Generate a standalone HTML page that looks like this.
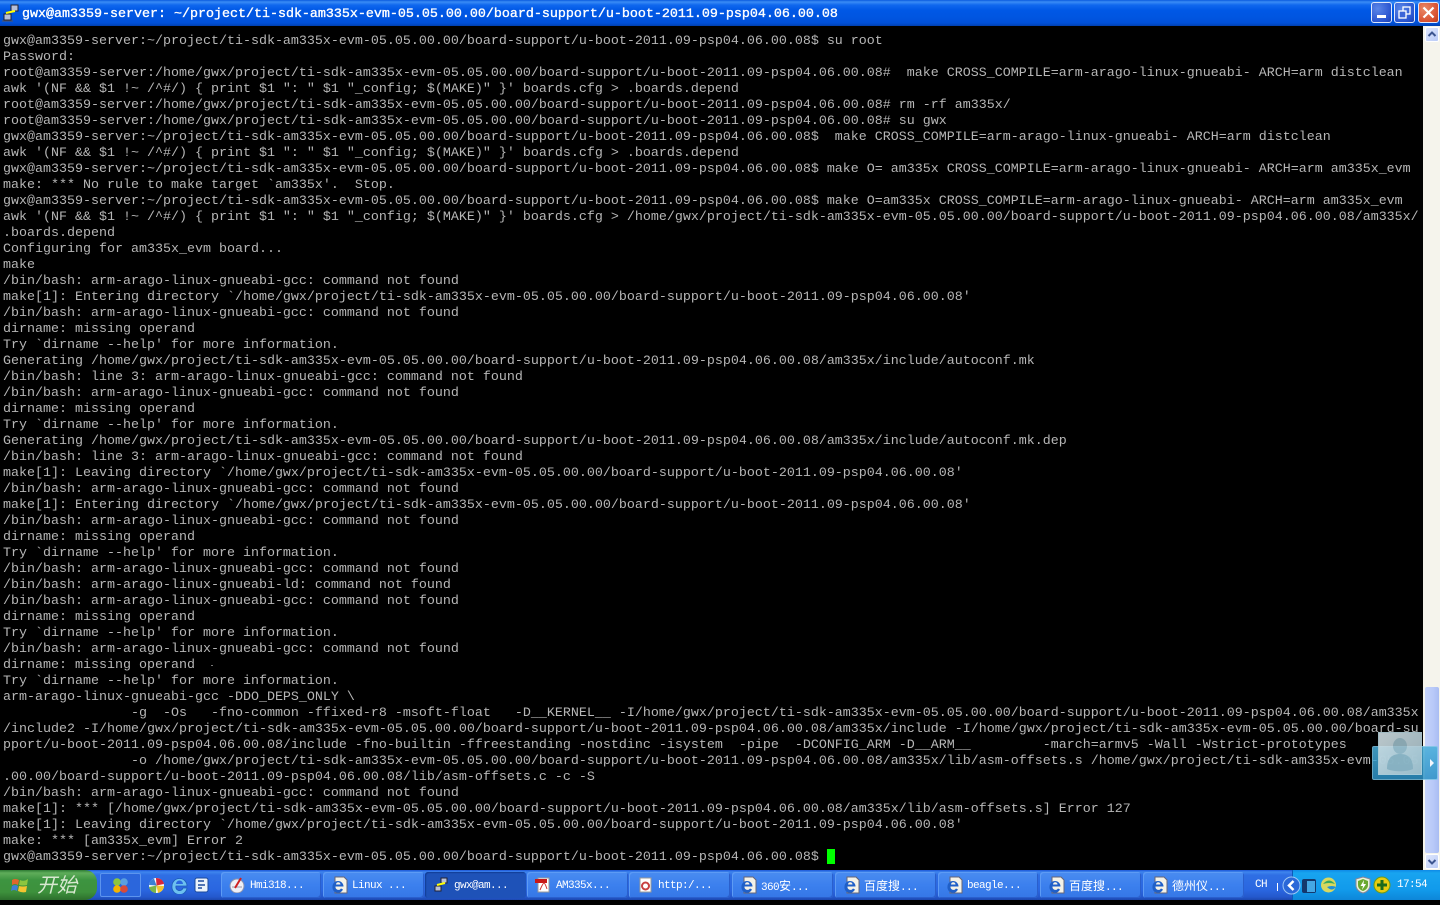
<!DOCTYPE html>
<html><head><meta charset="utf-8"><style>
html,body{margin:0;padding:0;width:1440px;height:900px;overflow:hidden;background:#000}
#title{position:absolute;left:0;top:0;width:1440px;height:26px;background:linear-gradient(180deg,#0a5adf 0,#3a8cf5 2px,#1068ee 5px,#0058e6 10px,#0055e0 18px,#0050d8 23px,#0040b0 26px)}
#ttext{position:absolute;left:22px;top:7px;font:13.333px/16px "Liberation Mono",monospace;-webkit-text-stroke:.35px #fff;color:#fff;white-space:pre}
.wb{position:absolute;top:2px;width:19px;height:19px;border:1px solid #dfe8fb;border-radius:3px;background:radial-gradient(circle at 30% 30%,#5a86e8,#2a55d0 70%,#1c3fb0)}
#term{position:absolute;left:3px;top:34px;width:1419px;height:834px;overflow:hidden;font:13.333px/16px "Liberation Mono",monospace;color:#b6b6b6;white-space:pre;margin:0;filter:blur(.3px)}
#cur{position:absolute;left:827px;top:849px;width:8px;height:15px;background:#00ff00}
#sb{position:absolute;left:1423px;top:26px;width:17px;height:844px;background:#f5f4ec}
.sbtn{position:absolute;left:2px;width:14px;height:15px;background:linear-gradient(135deg,#dfe7fd,#b9caf6);border:1px solid #fff;box-sizing:border-box;border-radius:2px}
#thumb{position:absolute;left:2px;top:661px;width:14px;height:166px;background:linear-gradient(90deg,#c4d2fa,#b8c9f8 60%,#a9bcf2);border-radius:2px}
#wbar{position:absolute;left:1372px;top:746px;width:66px;height:34px;background:linear-gradient(180deg,#49afdb,#2d92c6);border:1px solid #7cc4e4;box-sizing:border-box;border-radius:2px;opacity:.85}
#wav{position:absolute;left:1378px;top:732px;width:44px;height:43px;background:linear-gradient(135deg,#d4e2e7,#a9c5cf);border:1px solid #b8d5df;box-sizing:border-box;opacity:.88}
#task{position:absolute;left:0;top:870px;width:1440px;height:30px;background:linear-gradient(180deg,#1c55d8 0,#3f86ee 2px,#2f6fe4 5px,#2a66e0 20px,#2458cc 27px,#1c48b0 30px)}
#start{position:absolute;left:0;top:0;width:97px;height:30px;border-radius:0 12px 12px 0;background:linear-gradient(180deg,#2e7b34 0,#5fad5a 3px,#3d9440 10px,#3d913c 22px,#2c6e2c 30px)}
#start span{position:absolute;left:37px;top:2px;font:italic 20px/24px "WenQuanYi Zen Hei","Noto Sans CJK SC",sans-serif;color:#d8e8d0}
.b{position:absolute;top:2px;height:26px;border-radius:3px;background:linear-gradient(180deg,#4a8cf0,#3c80ee 50%,#3577e6);box-shadow:inset 1px 1px 0 #5d9bf4,inset -1px -1px 0 #2a5fcc;color:#fff;font:11px/26px "Liberation Mono",monospace;letter-spacing:-.6px;white-space:pre;box-sizing:border-box}
.b.on{background:#1e52b8;box-shadow:inset 1px 1px 1px #123d96}
.b i{position:absolute;top:4px;left:8px;width:17px;height:18px}
.b span{position:absolute;left:29px;top:1px}
.cjk{font:12px/26px "WenQuanYi Zen Hei","Noto Sans CJK SC",sans-serif;letter-spacing:0}
#tray{position:absolute;left:1292px;top:0;width:148px;height:30px;background:linear-gradient(180deg,#0f8ae6 0,#18a4f0 3px,#119aeb 20px,#0d86d8 30px);border-left:1px solid #0c5ab8;box-sizing:border-box}
.clock{position:absolute;left:1397px;top:0;font:11px/30px "Liberation Mono",monospace;letter-spacing:-.6px;color:#fff;white-space:pre}
</style></head><body>
<svg width="0" height="0" style="position:absolute"><symbol id="ie" viewBox="0 0 17 18"><path d="M4 1h9l3 3v13H4z" fill="#f4f2e8" stroke="#667"/><path d="M1.500 10.500a5.500 5.500 0 1 1 11 0H4.500a3 3 0 0 0 5.500 2l2 1a5.500 5.500 0 0 1-10.500-3z" fill="#1f5fc8"/><path d="M5 8.500a2.200 2.200 0 0 1 4.500 0z" fill="#f4f2e8"/></symbol></svg>
<div id="title">
<svg style="position:absolute;left:2px;top:4px" width="18" height="18" viewBox="0 0 18 18"><rect x="9" y="1" width="7" height="6" fill="#b8c0d8" stroke="#223"/><rect x="2" y="10" width="7" height="6" fill="#b8c0d8" stroke="#223"/><path d="M4 9 L13 7" stroke="#ff0" stroke-width="2"/><path d="M0 17h11" stroke="#556" stroke-width="1"/></svg>
<div id="ttext">gwx@am3359-server: ~/project/ti-sdk-am335x-evm-05.05.00.00/board-support/u-boot-2011.09-psp04.06.00.08</div>
<div class="wb" style="left:1371px"><div style="position:absolute;left:5px;top:12px;width:9px;height:3px;background:#fff"></div></div>
<div class="wb" style="left:1394px"><svg width="19" height="19" style="position:absolute;left:0;top:0"><rect x="8" y="4" width="7" height="7" fill="none" stroke="#fff" stroke-width="1.3"/><rect x="4" y="8" width="7" height="7" fill="#3c65d8" stroke="#fff" stroke-width="1.3"/></svg></div>
<div class="wb" style="left:1418px;background:radial-gradient(circle at 30% 30%,#ea8a68,#d85030 70%,#b83c18)"><svg width="19" height="19" style="position:absolute;left:0;top:0"><path d="M4.500 4.500L14.500 14.500M14.500 4.500L4.500 14.500" stroke="#fff" stroke-width="2.2"/></svg></div>
</div>
<pre id="term">gwx@am3359-server:~/project/ti-sdk-am335x-evm-05.05.00.00/board-support/u-boot-2011.09-psp04.06.00.08$ su root
Password:
root@am3359-server:/home/gwx/project/ti-sdk-am335x-evm-05.05.00.00/board-support/u-boot-2011.09-psp04.06.00.08#  make CROSS_COMPILE=arm-arago-linux-gnueabi- ARCH=arm distclean
awk '(NF &amp;&amp; $1 !~ /^#/) { print $1 ": " $1 "_config; $(MAKE)" }' boards.cfg &gt; .boards.depend
root@am3359-server:/home/gwx/project/ti-sdk-am335x-evm-05.05.00.00/board-support/u-boot-2011.09-psp04.06.00.08# rm -rf am335x/
root@am3359-server:/home/gwx/project/ti-sdk-am335x-evm-05.05.00.00/board-support/u-boot-2011.09-psp04.06.00.08# su gwx
gwx@am3359-server:~/project/ti-sdk-am335x-evm-05.05.00.00/board-support/u-boot-2011.09-psp04.06.00.08$  make CROSS_COMPILE=arm-arago-linux-gnueabi- ARCH=arm distclean
awk '(NF &amp;&amp; $1 !~ /^#/) { print $1 ": " $1 "_config; $(MAKE)" }' boards.cfg &gt; .boards.depend
gwx@am3359-server:~/project/ti-sdk-am335x-evm-05.05.00.00/board-support/u-boot-2011.09-psp04.06.00.08$ make O= am335x CROSS_COMPILE=arm-arago-linux-gnueabi- ARCH=arm am335x_evm
make: *** No rule to make target `am335x'.  Stop.
gwx@am3359-server:~/project/ti-sdk-am335x-evm-05.05.00.00/board-support/u-boot-2011.09-psp04.06.00.08$ make O=am335x CROSS_COMPILE=arm-arago-linux-gnueabi- ARCH=arm am335x_evm
awk '(NF &amp;&amp; $1 !~ /^#/) { print $1 ": " $1 "_config; $(MAKE)" }' boards.cfg &gt; /home/gwx/project/ti-sdk-am335x-evm-05.05.00.00/board-support/u-boot-2011.09-psp04.06.00.08/am335x/
.boards.depend
Configuring for am335x_evm board...
make
/bin/bash: arm-arago-linux-gnueabi-gcc: command not found
make[1]: Entering directory `/home/gwx/project/ti-sdk-am335x-evm-05.05.00.00/board-support/u-boot-2011.09-psp04.06.00.08'
/bin/bash: arm-arago-linux-gnueabi-gcc: command not found
dirname: missing operand
Try `dirname --help' for more information.
Generating /home/gwx/project/ti-sdk-am335x-evm-05.05.00.00/board-support/u-boot-2011.09-psp04.06.00.08/am335x/include/autoconf.mk
/bin/bash: line 3: arm-arago-linux-gnueabi-gcc: command not found
/bin/bash: arm-arago-linux-gnueabi-gcc: command not found
dirname: missing operand
Try `dirname --help' for more information.
Generating /home/gwx/project/ti-sdk-am335x-evm-05.05.00.00/board-support/u-boot-2011.09-psp04.06.00.08/am335x/include/autoconf.mk.dep
/bin/bash: line 3: arm-arago-linux-gnueabi-gcc: command not found
make[1]: Leaving directory `/home/gwx/project/ti-sdk-am335x-evm-05.05.00.00/board-support/u-boot-2011.09-psp04.06.00.08'
/bin/bash: arm-arago-linux-gnueabi-gcc: command not found
make[1]: Entering directory `/home/gwx/project/ti-sdk-am335x-evm-05.05.00.00/board-support/u-boot-2011.09-psp04.06.00.08'
/bin/bash: arm-arago-linux-gnueabi-gcc: command not found
dirname: missing operand
Try `dirname --help' for more information.
/bin/bash: arm-arago-linux-gnueabi-gcc: command not found
/bin/bash: arm-arago-linux-gnueabi-ld: command not found
/bin/bash: arm-arago-linux-gnueabi-gcc: command not found
dirname: missing operand
Try `dirname --help' for more information.
/bin/bash: arm-arago-linux-gnueabi-gcc: command not found
dirname: missing operand
Try `dirname --help' for more information.
arm-arago-linux-gnueabi-gcc -DDO_DEPS_ONLY \
                -g  -Os   -fno-common -ffixed-r8 -msoft-float   -D__KERNEL__ -I/home/gwx/project/ti-sdk-am335x-evm-05.05.00.00/board-support/u-boot-2011.09-psp04.06.00.08/am335x
/include2 -I/home/gwx/project/ti-sdk-am335x-evm-05.05.00.00/board-support/u-boot-2011.09-psp04.06.00.08/am335x/include -I/home/gwx/project/ti-sdk-am335x-evm-05.05.00.00/board-su
pport/u-boot-2011.09-psp04.06.00.08/include -fno-builtin -ffreestanding -nostdinc -isystem  -pipe  -DCONFIG_ARM -D__ARM__         -march=armv5 -Wall -Wstrict-prototypes
                -o /home/gwx/project/ti-sdk-am335x-evm-05.05.00.00/board-support/u-boot-2011.09-psp04.06.00.08/am335x/lib/asm-offsets.s /home/gwx/project/ti-sdk-am335x-evm-05.05
.00.00/board-support/u-boot-2011.09-psp04.06.00.08/lib/asm-offsets.c -c -S
/bin/bash: arm-arago-linux-gnueabi-gcc: command not found
make[1]: *** [/home/gwx/project/ti-sdk-am335x-evm-05.05.00.00/board-support/u-boot-2011.09-psp04.06.00.08/am335x/lib/asm-offsets.s] Error 127
make[1]: Leaving directory `/home/gwx/project/ti-sdk-am335x-evm-05.05.00.00/board-support/u-boot-2011.09-psp04.06.00.08'
make: *** [am335x_evm] Error 2
gwx@am3359-server:~/project/ti-sdk-am335x-evm-05.05.00.00/board-support/u-boot-2011.09-psp04.06.00.08$ </pre>
<div style="position:absolute;left:211px;top:665px;width:2px;height:1px;background:#777"></div>
<div id="cur"></div>
<div id="sb">
<div class="sbtn" style="top:1px"><svg width="12" height="13" style="display:block"><path d="M2.500 8L6 4.500 9.500 8" fill="none" stroke="#3c5590" stroke-width="2"/></svg></div>
<div id="thumb"></div>
<div class="sbtn" style="top:828px"><svg width="12" height="13" style="display:block"><path d="M2.500 5L6 8.500 9.500 5" fill="none" stroke="#3c5590" stroke-width="2"/></svg></div>
</div>
<div id="wbar"><svg width="8" height="10" style="position:absolute;right:1px;top:11px"><path d="M2 1L6 5 2 9z" fill="#fff"/></svg></div>
<div id="wav"><svg width="42" height="41" viewBox="0 0 42 41"><ellipse cx="21" cy="13" rx="7" ry="8" fill="#9dbdc9"/><path d="M8 36C8 24 14 21 21 21s13 3 13 15c-6 3-20 3-26 0z" fill="#94b8c5"/></svg></div>
<div id="task">
<div id="start">
<svg style="position:absolute;left:11px;top:6px" width="18" height="18" viewBox="0 0 18 18"><path d="M1 4Q4 2 8 4L7 9Q4 7 1 9z" fill="#e0662c"/><path d="M9 4Q13 6 17 3L16 9Q12 10 8 9z" fill="#8cc63f"/><path d="M1 10Q4 8 7 10L6 15Q3 13 0 15z" fill="#3f7fd8"/><path d="M8 10Q12 11 16 10L15 16Q11 17 7 15z" fill="#f4c430"/></svg>
<span>开始</span>
</div>
<div style="position:absolute;left:100px;top:3px;width:41px;height:24px;border:1px solid #5c94ee;border-radius:2px;box-sizing:border-box;background:#2b66dc"></div>
<svg style="position:absolute;left:112px;top:7px" width="17" height="17"><circle cx="5" cy="5" r="3.800" fill="#8cc63f"/><circle cx="12" cy="5" r="3.800" fill="#5aa0e0"/><circle cx="5" cy="12" r="3.800" fill="#f4b400"/><circle cx="12" cy="12" r="3.800" fill="#d84a3a"/></svg>
<svg style="position:absolute;left:148px;top:7px" width="17" height="17"><circle cx="8.500" cy="8.500" r="7.500" fill="#fff"/><path d="M8.500 8.500L8 1A7.500 7.500 0 0 1 16 7z" fill="#d8263a"/><path d="M8.500 8.500L16 9A7.500 7.500 0 0 1 10 16z" fill="#f4c430"/><path d="M8.500 8.500L8 16A7.500 7.500 0 0 1 1 10z" fill="#7ab648"/><path d="M8.500 8.500L1 8A7.500 7.500 0 0 1 6 1.500z" fill="#3b7fd4"/></svg>
<svg style="position:absolute;left:171px;top:6px" width="17" height="18" viewBox="0 0 17 18"><path d="M1 10a7.500 7.500 0 0 1 15 0H5a3.500 3.500 0 0 0 7 2h4a7.500 7.500 0 0 1-15-2z" fill="#6cc0f0" stroke="#1c5ab8" stroke-width=".8"/><path d="M5 8a3.500 3.500 0 0 1 7 0z" fill="#2a66e0"/></svg>
<svg style="position:absolute;left:194px;top:7px" width="16" height="16"><rect x="1" y="1" width="13" height="14" rx="2" fill="#eaf2fb" stroke="#1c4a9c"/><path d="M4 4h6M4 8h7M4 11h4" stroke="#1c4a9c" stroke-width="1.500"/></svg>

<div class="b" style="left:221px;width:100px"><i><svg width="16" height="16" style="margin-top:1px"><circle cx="8" cy="9" r="7" fill="#eef0f6" stroke="#8a93b0"/><path d="M3 10h10" stroke="#99a"/><path d="M6 11L12 1" stroke="#d02020" stroke-width="2"/></svg></i><span>Hmi318...</span></div>
<div class="b" style="left:323px;width:101px"><i><svg width="17" height="18"><use href="#ie"/></svg></i><span>Linux ...</span></div>
<div class="b on" style="left:425px;width:101px"><i><svg width="16" height="16" style="margin-top:1px"><rect x="8" y="1" width="6" height="5" fill="#b8c0d8" stroke="#223"/><rect x="2" y="9" width="6" height="5" fill="#b8c0d8" stroke="#223"/><path d="M4 8L12 6" stroke="#ff0" stroke-width="2"/></svg></i><span>gwx@am...</span></div>
<div class="b" style="left:527px;width:101px"><i><svg width="16" height="16" style="margin-top:1px"><path d="M3 1h11v14H3z" fill="#fff" stroke="#999"/><rect x="0" y="2" width="12" height="4" fill="#c81818"/><path d="M5 13Q8 6 9 6t3 6" fill="none" stroke="#d43030"/></svg></i><span>AM335x...</span></div>
<div class="b" style="left:629px;width:101px"><i><svg width="16" height="16" style="margin-top:1px"><path d="M3 1h11v14H3z" fill="#fff" stroke="#999"/><circle cx="8.500" cy="9" r="3.500" fill="none" stroke="#c84040" stroke-width="2"/></svg></i><span>http:/...</span></div>
<div class="b" style="left:732px;width:101px"><i><svg width="17" height="18"><use href="#ie"/></svg></i><span>360<b class="cjk" style="font-weight:normal">安</b>...</span></div>
<div class="b" style="left:835px;width:101px"><i><svg width="17" height="18"><use href="#ie"/></svg></i><span><b class="cjk" style="font-weight:normal">百度搜</b>...</span></div>
<div class="b" style="left:938px;width:100px"><i><svg width="17" height="18"><use href="#ie"/></svg></i><span>beagle...</span></div>
<div class="b" style="left:1040px;width:101px"><i><svg width="17" height="18"><use href="#ie"/></svg></i><span><b class="cjk" style="font-weight:normal">百度搜</b>...</span></div>
<div class="b" style="left:1143px;width:101px"><i><svg width="17" height="18"><use href="#ie"/></svg></i><span><b class="cjk" style="font-weight:normal">德州仪</b>...</span></div>

<div style="position:absolute;left:1255px;top:0;font:11px/30px 'Liberation Mono',monospace;letter-spacing:-.6px;color:#fff">CH</div>
<div style="position:absolute;left:1277px;top:13px;width:1px;height:8px;background:#fff"></div>
<div id="tray"></div>
<svg style="position:absolute;left:1282px;top:6px" width="19" height="19"><circle cx="9.500" cy="9.500" r="8.500" fill="#2a68d8" stroke="#9cc6f5"/><path d="M11.500 5L7 9.500 11.500 14" fill="none" stroke="#fff" stroke-width="2.500"/></svg>
<svg style="position:absolute;left:1301px;top:8px" width="16" height="16"><rect x="1" y="1" width="14" height="14" rx="2" fill="#14386c"/><path d="M6 3h8v11H6z" fill="#45a8e4"/></svg>
<svg style="position:absolute;left:1320px;top:7px" width="17" height="16"><circle cx="8.500" cy="8" r="7.500" fill="#d8d860"/><path d="M3 7Q9 0 15 7Q9 5 3 7z" fill="#3aa860"/><path d="M7 10Q12 8 16 10 12 15 7 10z" fill="#1f8fd8"/></svg>
<svg style="position:absolute;left:1355px;top:6px" width="16" height="18"><path d="M8 1l7 2v6c0 4-3 7-7 8-4-1-7-4-7-8V3z" fill="#e8f2dc" stroke="#889"/><path d="M8 3l5 2v4c0 3-2 5-5 6-3-1-5-3-5-6V5z" fill="#6aa830"/><path d="M9 4L5.500 10H8L7 14l4-6H8.500z" fill="#fff"/></svg>
<svg style="position:absolute;left:1373px;top:6px" width="18" height="18"><circle cx="9" cy="9" r="8" fill="#e8cc10" stroke="#6a9a20"/><path d="M9 4v10M4 9h10" stroke="#1c6a1c" stroke-width="3"/></svg>
<div class="clock">17:54</div>
</div>
</body></html>
